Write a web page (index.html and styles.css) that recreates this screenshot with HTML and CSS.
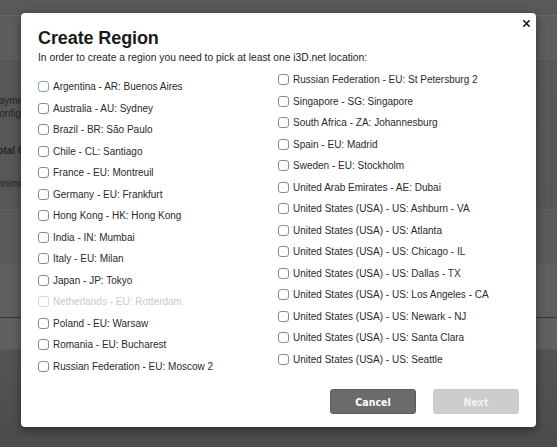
FILE: index.html
```html
<!DOCTYPE html>
<html>
<head>
<meta charset="utf-8">
<link rel="stylesheet" href="styles.css">
</head>
<body>
<div class="page">
  <div class="topbar"></div>
  <div class="band"></div>
  <div class="content">
    <p class="bgtext t1">Payment</p>
    <p class="bgtext">Configuration</p>
    <p class="bgtext bold t2">Total Cap</p>
    <p class="bgtext t3">Minimum a</p>
  </div>
  <div class="row r1"></div>
  <div class="row r2"></div>
  <div class="row r3"></div>
  <div class="footer"></div>
</div>

<div class="modal">
  <button class="close" aria-label="Close">
    <svg width="7" height="7" viewBox="0 0 7 7"><path d="M0.8 0.8L6.2 6.2M6.2 0.8L0.8 6.2" stroke="#111" stroke-width="1.5" stroke-linecap="square"/></svg>
  </button>
  <h1 class="title">Create Region</h1>
  <p class="subtitle">In order to create a region you need to pick at least one i3D.net location:</p>
  <div class="columns">
    <div class="col col-left">
      <label class="opt"><span class="box focus"></span>Argentina - AR: Buenos Aires</label>
      <label class="opt"><span class="box"></span>Australia - AU: Sydney</label>
      <label class="opt"><span class="box"></span>Brazil - BR: São Paulo</label>
      <label class="opt"><span class="box"></span>Chile - CL: Santiago</label>
      <label class="opt"><span class="box"></span>France - EU: Montreuil</label>
      <label class="opt"><span class="box"></span>Germany - EU: Frankfurt</label>
      <label class="opt"><span class="box"></span>Hong Kong - HK: Hong Kong</label>
      <label class="opt"><span class="box"></span>India - IN: Mumbai</label>
      <label class="opt"><span class="box"></span>Italy - EU: Milan</label>
      <label class="opt"><span class="box"></span>Japan - JP: Tokyo</label>
      <label class="opt disabled"><span class="box"></span>Netherlands - EU: Rotterdam</label>
      <label class="opt"><span class="box"></span>Poland - EU: Warsaw</label>
      <label class="opt"><span class="box"></span>Romania - EU: Bucharest</label>
      <label class="opt"><span class="box"></span>Russian Federation - EU: Moscow 2</label>
    </div>
    <div class="col col-right">
      <label class="opt"><span class="box"></span>Russian Federation - EU: St Petersburg 2</label>
      <label class="opt"><span class="box"></span>Singapore - SG: Singapore</label>
      <label class="opt"><span class="box"></span>South Africa - ZA: Johannesburg</label>
      <label class="opt"><span class="box"></span>Spain - EU: Madrid</label>
      <label class="opt"><span class="box"></span>Sweden - EU: Stockholm</label>
      <label class="opt"><span class="box"></span>United Arab Emirates - AE: Dubai</label>
      <label class="opt"><span class="box"></span>United States (USA) - US: Ashburn - VA</label>
      <label class="opt"><span class="box"></span>United States (USA) - US: Atlanta</label>
      <label class="opt"><span class="box"></span>United States (USA) - US: Chicago - IL</label>
      <label class="opt"><span class="box"></span>United States (USA) - US: Dallas - TX</label>
      <label class="opt"><span class="box"></span>United States (USA) - US: Los Angeles - CA</label>
      <label class="opt"><span class="box"></span>United States (USA) - US: Newark - NJ</label>
      <label class="opt"><span class="box"></span>United States (USA) - US: Santa Clara</label>
      <label class="opt"><span class="box"></span>United States (USA) - US: Seattle</label>
    </div>
  </div>
  <div class="actions">
    <button class="btn btn-cancel">Cancel</button>
    <button class="btn btn-next">Next</button>
  </div>
</div>
</body>
</html>
```

FILE: styles.css
```css
* { box-sizing: border-box; }
html, body { margin: 0; padding: 0; }
body {
  width: 557px;
  height: 447px;
  overflow: hidden;
  background: #4f4f4f;
  font-family: "Liberation Sans", Arial, sans-serif;
}
.page {
  height: 447px;
  background: linear-gradient(180deg, #585858 0%, #565656 70%, #4c4c4c 100%);
}
.topbar {
  height: 16px;
  background: #595959;
  border-bottom: 1px solid #676767;
}
.band {
  height: 44px;
  background: #5d5d5d;
  border-bottom: 1px solid #616161;
}
.content {
  height: 150px;
  padding-top: 34px;
  margin-left: -8px;
  border-bottom: 1px solid #636363;
}
.bgtext {
  margin: 0;
  font-size: 10px;
  line-height: 13px;
  color: #262626;
}
.bgtext.bold { font-weight: bold; }
.t2 { margin-top: 24px; }
.t3 { margin-top: 20px; }
.row { border-bottom: 1px solid #5f5f5f; }
.r1 { height: 54px; background: #5a5a5a; }
.r2 { height: 54px; background: #5e5e5e; border-bottom: 1px solid #353535; }
.r3 { height: 32px; background: #606060; border-bottom: 1px solid #595959; }
.footer { height: 80px; }

.modal {
  position: absolute;
  left: 21px;
  top: 13px;
  width: 515px;
  height: 414px;
  background: #fff;
  border-radius: 4px;
  box-shadow: 0 3px 10px rgba(0,0,0,0.45);
  padding: 15px 17px 0 17px;
  display: flex;
  flex-direction: column;
}
.close {
  position: absolute;
  right: 4px;
  top: 5px;
  width: 11px;
  height: 11px;
  padding: 0;
  border: 0;
  background: none;
  display: flex;
  align-items: center;
  justify-content: center;
}
.title {
  margin: 0;
  font-size: 18px;
  line-height: 20px;
  font-weight: bold;
  color: #1b1b1b;
  letter-spacing: -0.1px;
}
.subtitle {
  margin: 4px 0 0 0;
  font-size: 10.3px;
  line-height: 12px;
  color: #1e1e1e;
}
.columns {
  display: grid;
  grid-template-columns: 240px 1fr;
  margin-top: 5px;
}
.col { display: flex; flex-direction: column; }
.col-left { padding-top: 7px; }
.opt {
  display: flex;
  align-items: center;
  height: 21.5px;
  font-size: 10px;
  color: #2a2a2a;
}
.box {
  width: 11px;
  height: 11px;
  border: 1px solid #8c8c8c;
  border-radius: 3px;
  background: #fff;
  margin-right: 4px;
  flex: none;
}
.box.focus { border-color: #7f9fd8; }
.opt.disabled { color: #c9c9c9; }
.opt.disabled .box { border-color: #dadada; }

.actions {
  margin-top: auto;
  margin-bottom: 13px;
  display: flex;
  justify-content: flex-end;
  gap: 17px;
}
.btn {
  width: 86px;
  height: 25px;
  border-radius: 3px;
  font-family: "DejaVu Sans", sans-serif;
  font-stretch: condensed;
  font-weight: bold;
  font-size: 10.5px;
  color: #fff;
  padding: 0;
}
.btn-cancel {
  background: #6b6b6b;
  border: 1px solid #5c5c5c;
}
.btn-next {
  background: #cdcdcd;
  border: 1px solid #c8c8c8;
  color: #f2f2f2;
}
```
